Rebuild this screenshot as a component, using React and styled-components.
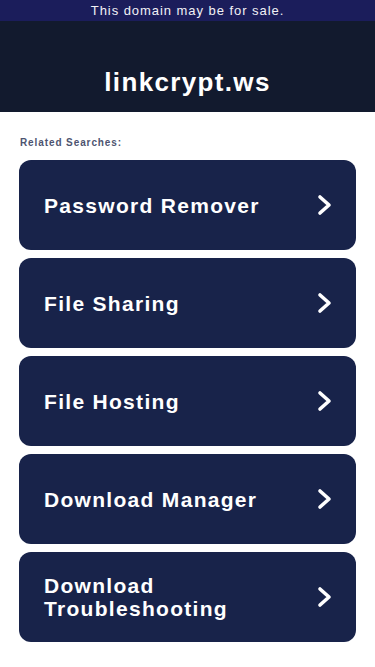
import styled, { createGlobalStyle } from 'styled-components'

const Global = createGlobalStyle`
  body {
    margin: 0;
    background: #ffffff;
    font-family: "Liberation Sans", Arial, sans-serif;
  }
`

const SaleBar = styled.div`
  height: 21px;
  background: #1b1d5b;
  color: #f1f1f6;
  font-size: 13px;
  letter-spacing: 0.95px;
  display: flex;
  align-items: center;
  justify-content: center;
`

const Header = styled.header`
  height: 91px;
  background: #121a2e;
  display: flex;
  align-items: flex-end;
  justify-content: center;
  padding-bottom: 15px;
  box-sizing: border-box;
`

const Title = styled.h1`
  margin: 0;
  color: #ffffff;
  font-size: 26px;
  font-weight: 700;
  line-height: 30px;
  letter-spacing: 1.35px;
`

const Main = styled.main`
  padding: 25px 19px 24px;
`

const Label = styled.div`
  color: #4d5470;
  font-size: 10px;
  font-weight: 700;
  letter-spacing: 0.9px;
  margin-left: 1px;
  margin-bottom: 12px;
`

const List = styled.div`
  display: flex;
  flex-direction: column;
  gap: 8px;
`

const Card = styled.a`
  height: 90px;
  box-sizing: border-box;
  border-radius: 12px;
  background: #18234a;
  display: flex;
  align-items: center;
  justify-content: space-between;
  padding: 0 22px 0 25px;
  color: #ffffff;
  text-decoration: none;
  cursor: pointer;
`

const CardText = styled.span`
  font-size: 21px;
  font-weight: 700;
  line-height: 23px;
  letter-spacing: 1.3px;
`

const Chevron = () => (
  <svg width="18" height="22" viewBox="0 0 18 22" fill="none">
    <path d="M4 3 L13 11 L4 19" stroke="#ffffff" strokeWidth="3.6" strokeLinecap="round" strokeLinejoin="round" />
  </svg>
)

const searches = [
  ['Password Remover'],
  ['File Sharing'],
  ['File Hosting'],
  ['Download Manager'],
  ['Download', 'Troubleshooting'],
]

export default function App () {
  return (
    <>
      <Global />
      <SaleBar>This domain may be for sale.</SaleBar>
      <Header>
        <Title>linkcrypt.ws</Title>
      </Header>
      <Main>
        <Label>Related Searches:</Label>
        <List>
          {searches.map(lines => (
            <Card key={lines.join(' ')}>
              <CardText>
                {lines.map((l, i) => (
                  <span key={l}>{i > 0 && <br />}{l}</span>
                ))}
              </CardText>
              <Chevron />
            </Card>
          ))}
        </List>
      </Main>
    </>
  )
}
